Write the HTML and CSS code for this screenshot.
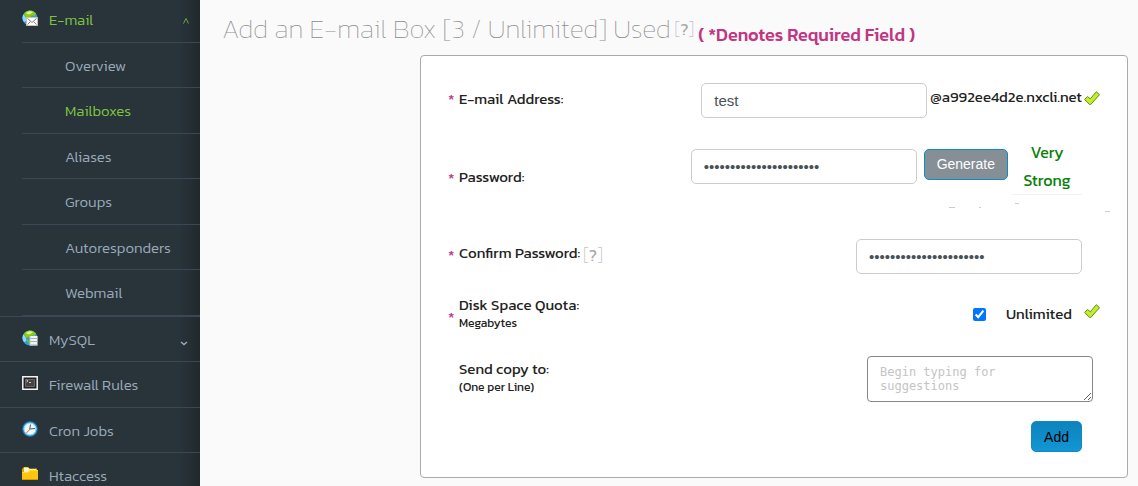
FILE: index.html
```html
<!DOCTYPE html>
<html lang="en">
<head>
    <meta charset="UTF-8">
    <meta name="viewport" content="width=device-width, initial-scale=1.0">
    <title>Add an E-mail Box</title>
    <link rel="stylesheet" href="styles.css">
</head>
<body>
    <!-- shared shapes -->
    <svg class="sprite" aria-hidden="true">
        <symbol id="globe" viewBox="0 0 16 16">
            <circle cx="8" cy="8" r="7.6" fill="#2a9fe0"/>
            <path d="M2 12A7.6 7.6 0 0 1 1.5 4l2 3 1 4z" fill="#8fd8ff"/>
            <path d="M2 3.500C5-.4 11-.4 14 3.500L12.500 6l-2.500-.5L8 7.500 6 7 4.500 8.500 3 6z" fill="#8cc814"/>
            <path d="M4 3C6 1 9 .8 11 2L8.500 4 6 4.500z" fill="#dcf28a"/>
            <path d="M5 9l3 1-1 4-2-2zM13 6l2 1v3l-2-1z" fill="#6fb42c"/>
        </symbol>
        <symbol id="check" viewBox="0 0 16 14">
            <path d="M.6 8.500L3.500 5.500 6.300 7.800 12.300 .8 15.500 3.700 6.800 13.400 5.500 13.400z" fill="#c3ee2c" stroke="#5f8c10" stroke-width="1" stroke-linejoin="round"/>
        </symbol>
    </svg>

    <div class="layout">
        <!-- side menu -->
        <nav class="sidebar">
            <ul class="menu">
                <li class="menu-item open">
                    <a href="#" class="menu-link active">
                        <svg class="icon" viewBox="0 0 16 16">
                            <use href="#globe"/>
                            <path d="M4.500 7.500h11v8h-11z" fill="#fff" stroke="#cdc0b8"/>
                            <path d="M5.500 8.500l4.500 4 4.500-4M5.500 14.500l3-3M14.500 14.500l-3-3" fill="none" stroke="#8b8480"/>
                        </svg>
                        E-mail
                        <svg class="arrow" viewBox="0 0 8 8"><path d="M1.500 7.500L4 2.500l2.500 5" fill="none" stroke="currentColor" stroke-width=".8"/></svg>
                    </a>
                    <ul class="submenu">
                        <li><a href="#">Overview</a></li>
                        <li><a href="#" class="active">Mailboxes</a></li>
                        <li><a href="#">Aliases</a></li>
                        <li><a href="#">Groups</a></li>
                        <li><a href="#">Autoresponders</a></li>
                        <li><a href="#">Webmail</a></li>
                    </ul>
                </li>
                <li class="menu-item">
                    <a href="#" class="menu-link">
                        <svg class="icon" viewBox="0 0 16 16">
                            <use href="#globe"/>
                            <path d="M8 6h7.500v9.500H8z" fill="#f1f4f4"/>
                            <path d="M8 8.500h7.500M8 11.500h7.500M8 15h7.500" stroke="#a9b2b5"/>
                            <path d="M8 6v9.500" stroke="#bcc6c8"/>
                        </svg>
                        MySQL
                        <svg class="arrow down" viewBox="0 0 8 8"><path d="M1 3l3 2.500L7 3" fill="none" stroke="currentColor" stroke-width="1.500"/></svg>
                    </a>
                </li>
                <li class="menu-item">
                    <a href="#" class="menu-link">
                        <svg class="icon" viewBox="0 0 16 16">
                            <path d="M.8 1.800h14.400v12.400H.8z" fill="#222" stroke="#f4f4f4" stroke-width="1.500"/>
                            <path d="M3.500 4.500h9v7h-9z" fill="#444" stroke="#666"/>
                            <path d="M4.500 5l1.500 1-1.500 1M7 7.500h2" fill="none" stroke="#ccc"/>
                        </svg>
                        Firewall Rules
                    </a>
                </li>
                <li class="menu-item">
                    <a href="#" class="menu-link">
                        <svg class="icon" viewBox="0 0 16 16">
                            <circle cx="8" cy="8" r="7" fill="#eef9ff" stroke="#1c86cc" stroke-width="1.400"/>
                            <circle cx="8" cy="8" r="6" fill="none" stroke="#8bcdf2" stroke-width="1"/>
                            <path d="M8.500 3.500L7.800 8 13 7.500" fill="none" stroke="#555"/>
                            <path d="M8 8l-3.500 4" stroke="#e86a30"/>
                        </svg>
                        Cron Jobs
                    </a>
                </li>
                <li class="menu-item">
                    <a href="#" class="menu-link">
                        <svg class="icon" viewBox="0 0 16 16">
                            <path d="M0 3l2-2h4l1.500 1.500H15V14H0z" fill="#e8a000"/>
                            <path d="M2 1.500h4L7.500 3H14v3H2z" fill="#fff3cd"/>
                            <path d="M0 6h6l2-2h8v10H0z" fill="#ffc40c"/>
                            <path d="M0 6.500h6.200l2-2H16" fill="none" stroke="#ffe030"/>
                            <path d="M0 13.500h16" stroke="#e09500"/>
                        </svg>
                        Htaccess
                    </a>
                </li>
            </ul>
        </nav>

        <main class="content">
            <header class="page-head">
                <h1>Add an E-mail Box [3 / Unlimited] Used</h1>
                <a href="#" class="help">[<b>?</b>]</a>
                <span class="required-note">( *Denotes Required Field )</span>
            </header>

            <form class="card">
                <div class="row row-email">
                    <span class="star">*</span>
                    <label for="email">E-mail Address:</label>
                    <div class="control">
                        <input type="text" class="field" id="email" value="test">
                        <span class="domain">@a992ee4d2e.nxcli.net</span>
                    </div>
                    <svg class="check"><use href="#check"/></svg>
                </div>

                <div class="row row-password">
                    <span class="star">*</span>
                    <label for="password">Password:</label>
                    <div class="control">
                        <input type="password" class="field" id="password" value="abcdefghijklmnopqrstuv">
                        <button type="button" class="btn btn-generate">Generate</button>
                        <div class="strength">Very Strong</div>
                    </div>
                </div>

                <svg class="hint-line" viewBox="0 0 164 10" aria-hidden="true">
                    <path d="M1 4.500h6M31 4.500h2M67 .500h4M157 8.500h5" stroke="#ccc"/>
                </svg>

                <div class="row row-confirm">
                    <span class="star">*</span>
                    <div class="label-group">
                        <label for="confirm">Confirm Password:</label>
                        <a href="#" class="help">[<b>?</b>]</a>
                    </div>
                    <div class="control">
                        <input type="password" class="field" id="confirm" value="abcdefghijklmnopqrstuv">
                    </div>
                </div>

                <div class="row row-quota">
                    <span class="star">*</span>
                    <div class="label-text">Disk Space Quota:<small>Megabytes</small></div>
                    <div class="control">
                        <input type="checkbox" id="unlimited" checked>
                        <label for="unlimited">Unlimited</label>
                    </div>
                    <svg class="check"><use href="#check"/></svg>
                </div>

                <div class="row row-copy">
                    <label class="label-text" for="copy">Send copy to:<small>(One per Line)</small></label>
                    <div class="control">
                        <textarea id="copy" rows="2" placeholder="Begin typing for suggestions"></textarea>
                    </div>
                </div>

                <div class="actions">
                    <button type="submit" class="btn btn-add">Add</button>
                </div>
            </form>
        </main>
    </div>
</body>
</html>
```
FILE: styles.css
```css
* {
    box-sizing: border-box;
    margin: 0;
    padding: 0;
}

body {
    background: #fafafa;
    color: #222;
    font-family: Kanit, 'Noto Sans', sans-serif;
    font-size: 15px;
}

a {
    color: inherit;
    text-decoration: none;
}

ul {
    list-style: none;
}

.sprite {
    display: none;
}

.layout {
    display: flex;
    height: 100vh;
    overflow: hidden;
}

/* side menu */
.sidebar {
    flex: 0 0 200px;
    overflow: hidden;
    background: linear-gradient(to left, #20292c, #28333a 20px);
    color: #9aa9b8;
    font-weight: 300;
    line-height: 1.5;
}

.menu-item {
    border-bottom: 1px solid #3a4855;
}

.menu-link {
    display: flex;
    align-items: center;
    gap: 11px;
    padding: 12px 12px 10px 22px;
}

.open > .menu-link {
    margin-left: 22px;
    padding: 9px 10px 10px 0;
    border-bottom: 1px solid #3a4855;
}

.submenu li {
    margin-left: 22px;
    border-bottom: 1px solid #3a4855;
}

.submenu a {
    display: block;
    padding: 12px 0 10px 43px;
}

.active {
    color: #7fc241;
}

.icon {
    width: 16px;
    height: 16px;
    margin-bottom: 4px;
}

.arrow {
    width: 8px;
    height: 8px;
    margin-left: auto;
}

.arrow.down {
    margin-top: 6px;
}

/* page heading */
.content {
    flex: 1;
    padding: 0 10px 0 22px;
}

.page-head {
    display: flex;
    align-items: center;
    gap: 4px;
    height: 55px;
    padding-top: 2px;
    white-space: nowrap;
}

h1 {
    color: #8c8c8c;
    font-size: 27px;
    font-weight: 200;
    line-height: 34px;
}

.help {
    color: #aaa;
    font-size: 18px;
    font-weight: 200;
    line-height: 20px;
}

.help b {
    font-size: 16px;
    font-weight: 400;
}

.required-note {
    padding-top: 12px;
    color: #c13584;
    font-size: 18px;
    font-weight: 500;
}

/* form */
.card {
    margin-left: 198px;
    padding: 27px 27px 25px;
    background: #fff;
    border: 1px solid #aaa;
    border-radius: 4px;
}

.row {
    display: grid;
    grid-template-columns: 11px auto 1fr 18px;
    align-items: center;
}

.row label,
.label-text {
    line-height: 20px;
}

.row > label {
    padding-bottom: 2px;
}

.star {
    color: #c13584;
}

.control {
    display: flex;
    align-items: center;
    justify-content: flex-end;
}

.field {
    width: 226px;
    height: 35px;
    padding: 0 12px;
    border: 1px solid #ccc;
    border-radius: 5px;
    background: #fff;
    color: #495057;
    font-family: 'Liberation Sans', sans-serif;
    font-size: 15px;
}

.row-email > .star,
.row-email > label {
    padding-bottom: 4px;
}

.domain {
    margin: 0 0 8px 3px;
}

.check {
    width: 16px;
    height: 14px;
    margin: 0 0 6px 2px;
}

.row-password {
    margin-top: 20px;
}

.row-password > .star,
.row-password > label {
    padding-top: 22px;
}

.row-password .control {
    align-items: flex-start;
}

.row-password .field,
.row-password .btn {
    margin-top: 11px;
}

.btn {
    height: 31px;
    padding: 0 12px;
    border: 1px solid #0c8cc4;
    border-radius: 5px;
    font-family: 'Liberation Sans', sans-serif;
    font-size: 14px;
}

.btn-generate {
    margin-left: 7px;
    padding-bottom: 2px;
    background: #868e96;
    color: #fff;
}

.strength {
    width: 70px;
    margin-left: 4px;
    border-bottom: 1px solid #f2f2f2;
    color: #0a800a;
    font-size: 16px;
    line-height: 28px;
    text-align: center;
}

.hint-line {
    display: block;
    width: 164px;
    height: 10px;
    margin: 8px -12px 0 auto;
}

.row-confirm {
    margin-top: 26px;
}

.row-confirm > .star {
    padding-bottom: 4px;
}

.label-group {
    display: flex;
    align-items: center;
    gap: 3px;
    padding-bottom: 8px;
}

.label-group .help {
    padding-top: 4px;
}

.row-quota {
    margin-top: 23px;
}

.row small {
    display: block;
    font-size: 12px;
    line-height: 16px;
}

.row-quota > .star {
    padding-top: 4px;
}

.row-quota .label-text {
    margin-top: -2px;
}

.row-quota .control {
    padding-right: 10px;
}

.row-quota input {
    width: 13px;
    height: 13px;
    margin-right: 20px;
}

.row-copy {
    grid-template-columns: auto 1fr;
    margin-top: 25px;
    padding: 0 7px 0 11px;
}

.row-copy .label-text {
    padding-bottom: 4px;
}

textarea {
    width: 226px;
    height: 46px;
    padding: 8px 12px;
    border: 1px solid #888;
    border-radius: 4px;
    font-family: 'DejaVu Sans Mono', monospace;
    font-size: 12px;
    line-height: 14px;
}

textarea::placeholder {
    color: #c4c4c4;
}

.actions {
    display: flex;
    justify-content: flex-end;
    padding-right: 18px;
    margin-top: 19px;
}

.btn-add {
    background: linear-gradient(#0d83bd, #1296d3);
    color: #000;
}
```
